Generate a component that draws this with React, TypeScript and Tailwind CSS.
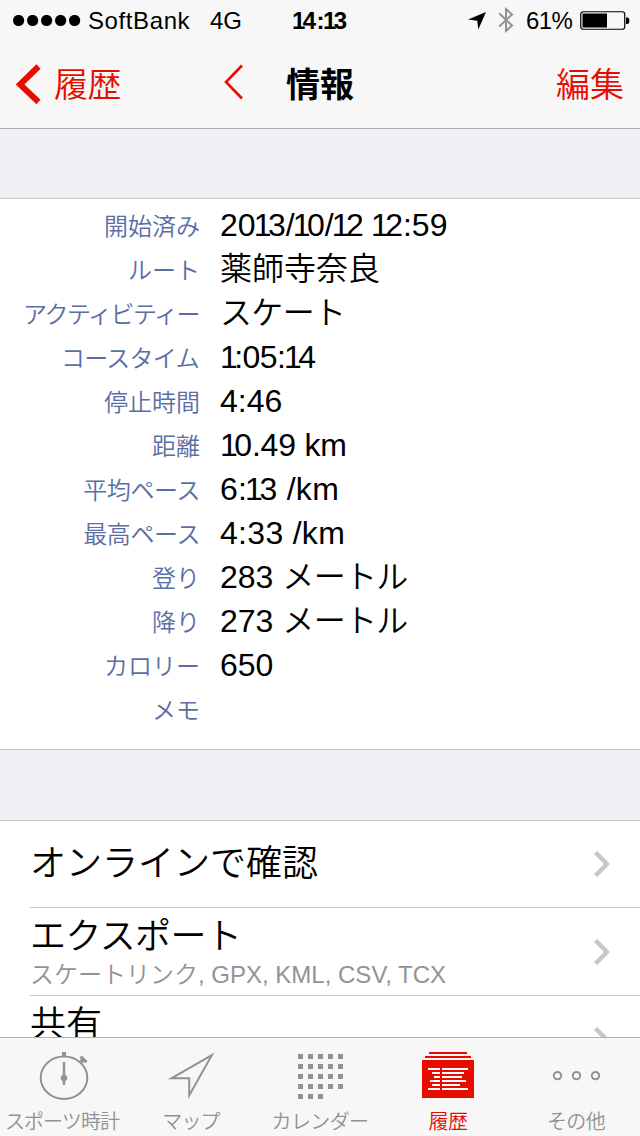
import React from 'react';

const details: [string, string, string][] = [
  ['開始済み', '2013/10/12 12:59', ''],
  ['ルート', '薬師寺奈良', ''],
  ['アクティビティー', 'スケート', 'tracking-[-1.5px] mr-px'],
  ['コースタイム', '1:05:14', 'tracking-[-0.7px] mr-px'],
  ['停止時間', '4:46', ''],
  ['距離', '10.49 km', ''],
  ['平均ペース', '6:13 /km', 'tracking-[-0.4px]'],
  ['最高ペース', '4:33 /km', 'tracking-[-0.4px]'],
  ['登り', '283 メートル', ''],
  ['降り', '273 メートル', ''],
  ['カロリー', '650', ''],
  ['メモ', '', ''],
];

const valueSpacing: Record<string, string> = {
  '1:05:14': 'tracking-[-0.6px]',
  '10.49 km': 'tracking-[-0.2px]',
  '6:13 /km': 'tracking-[0.3px]',
  '4:33 /km': 'tracking-[0.3px]',
};

/* Tightens the spacing around the digit 1 and in katakana words. */
function Figures({ text }: { text: string }) {
  return (
    <>
      {text.split(/(1|[^1](?=1)|[ァ-ー]+)/).map((part, i, all) => {
        if (part === '1') {
          return (
            <span key={i} className="tracking-[-0.11em]">
              1
            </span>
          );
        }
        if (/^[ァ-ー]+$/.test(part)) {
          return (
            <span key={i} className="tracking-[-0.02em]">
              {part}
            </span>
          );
        }
        if (part.length === 1 && all[i + 2] === '1') {
          return (
            <span key={i} className="tracking-[-0.06em]">
              {part}
            </span>
          );
        }
        return part;
      })}
    </>
  );
}

function Disclosure() {
  return (
    <svg width="16" height="26" viewBox="0 0 16 26" fill="none" className="mr-[30px] shrink-0">
      <path d="M1.6 1.4 L13 13 L1.6 24.6" stroke="#c7c7cc" strokeWidth="4.4" />
    </svg>
  );
}

function StatusBar() {
  return (
    <div className="flex h-10 items-center pt-[2px] pl-[13px] text-[24px] leading-[38px] whitespace-pre text-black">
      <svg width="68" height="12" viewBox="0 0 68 12">
        {[5.6, 19.6, 33.6, 47.6, 61.6].map((x) => (
          <circle key={x} cx={x} cy="5.5" r="5.6" />
        ))}
      </svg>
      <span className="ml-[7px] w-[122px] tracking-[0.6px]">SoftBank</span>
      <span className="w-[82px]">4G</span>
      <span className="w-[176px] font-bold tracking-[0.4px]">
        <Figures text="14:13" />
      </span>
      <svg width="18" height="18" viewBox="0 0 18 18" className="shrink-0">
        <path d="M18 0 L10.3 17.5 L9.3 8.7 L0 7.6 Z" />
      </svg>
      <svg width="16" height="28" viewBox="0 0 16 28" fill="none" className="mb-[2px] ml-3 shrink-0">
        <path d="M1.2 7.2 L14 19.5 L8 25 V3 L14 8.5 L1.2 20.5" stroke="#929292" strokeWidth="2" />
      </svg>
      <span className="ml-[12px] w-[54px] shrink-0 tracking-[-0.6px]">61%</span>
      <svg width="50" height="20" viewBox="0 0 50 20" className="shrink-0">
        <rect x="0.75" y="0.75" width="44" height="17.5" rx="2.5" fill="none" stroke="#000" strokeWidth="1.2" />
        <rect x="2.5" y="2.5" width="24.5" height="14" />
        <path d="M46 6.5 h1.2 a2 3 0 0 1 0 6.5 h-1.2 Z" />
      </svg>
    </div>
  );
}

function NavBar() {
  return (
    <div className="flex h-[88px] items-center pr-4 pl-4 text-[34px] leading-[88px] text-[#e80c00]">
      <svg width="26" height="40" viewBox="0 0 26 40" fill="none" className="shrink-0">
        <path d="M22.5 2.5 L4 20.5 L22.5 38" stroke="#e80c00" strokeWidth="6" />
      </svg>
      <span className="mt-[2px] ml-[12px] w-[169px] font-[350] tracking-[-0.5px]">履歴</span>
      <svg width="22" height="36" viewBox="0 0 22 36" fill="none" className="-mt-[4px] shrink-0">
        <path d="M19 1.5 L3 18 L19 34.5" stroke="#e80c00" strokeWidth="2.6" />
      </svg>
      <h1 className="mt-px ml-[41px] grow font-bold text-black">情報</h1>
      <span className="mt-px font-[350]">編集</span>
    </div>
  );
}

function Details() {
  return (
    <dl className="h-[552px] shrink-0 border-y border-[#c8c7cc] bg-white pt-[4px]">
      {details.map(([label, value, spacing]) => (
        <div key={label} className="flex h-11 items-center leading-[44px]">
          <dt className="w-[200px] pt-[3px] text-right text-[24px] font-[350] text-[#5a6ea5]">
            <span className={spacing}>{label}</span>
          </dt>
          <dd className={`ml-5 text-[32px] font-[350] text-black ${valueSpacing[value] ?? ''}`}>
            <Figures text={value} />
          </dd>
        </div>
      ))}
    </dl>
  );
}

function Actions() {
  return (
    <ul className="mt-[70px] border-t border-[#c8c7cc] bg-white pl-[30px]">
      <li className="flex h-[87px] items-center justify-between border-b border-[#c8c7cc]">
        <span className="text-[36px] leading-[50px] font-[350] text-black">オンラインで確認</span>
        <Disclosure />
      </li>
      <li className="flex h-[88px] items-center justify-between border-b border-[#c8c7cc]">
        <div className="flex flex-col pt-[2px]">
          <span className="text-[36px] leading-[44px] font-[350] tracking-[-0.6px] text-black">エクスポート</span>
          <span className="text-[24px] leading-[32px] font-[350] text-[#929297]">
            スケートリンク, GPX, KML, CSV, TCX
          </span>
        </div>
        <Disclosure />
      </li>
      <li className="flex h-[88px] items-center justify-between">
        <div className="flex h-[74px] flex-col">
          <span className="text-[36px] leading-[44px] font-[350] text-black">共有</span>
        </div>
        <Disclosure />
      </li>
    </ul>
  );
}

function StopwatchIcon() {
  return (
    <svg width="52" height="52" viewBox="0 0 52 52" fill="none" stroke="#929292" className="shrink-0">
      <ellipse cx="26" cy="27.8" rx="23.3" ry="21.2" strokeWidth="2" />
      <path d="M26 2 V7" strokeWidth="4" />
      <path d="M26 12 V35" strokeWidth="2.4" />
      <circle cx="26" cy="28" r="3.2" fill="#929292" stroke="none" />
      <path d="M43 12 L46 9" strokeWidth="4" />
      <path d="M42.5 6.5 L48.5 12.2" strokeWidth="3" />
    </svg>
  );
}

function MapIcon() {
  return (
    <svg width="52" height="52" viewBox="0 0 52 52" fill="none" stroke="#929292" strokeWidth="2" className="shrink-0">
      <path d="M45.8 5.2 L5.5 28.3 H23.2 V45.5 Z" strokeMiterlimit="10" />
    </svg>
  );
}

function CalendarIcon() {
  const cells = Array.from({ length: 23 }, (_, i) => i);
  return (
    <svg width="52" height="52" viewBox="0 0 52 52" fill="#929292" className="shrink-0">
      {cells.map((i) => (
        <rect key={i} x={4 + (i % 5) * 10} y={4 + Math.floor(i / 5) * 10} width="5" height="5" />
      ))}
    </svg>
  );
}

function HistoryIcon() {
  return (
    <svg width="52" height="52" viewBox="0 0 52 52" className="shrink-0">
      <path d="M7 2 H45 V4 H7 Z M3 6 H49 V8 H3 Z M0 10 H52 V48 H0 Z" fill="#e80c00" />
      <path
        d="M6 19 H18 M20 19 H46 M10 23 H18 M20 23 H42 M12 27 H18 M20 27 H40 M8 31 H18 M20 31 H44 M10 35 H18 M20 35 H38 M6 39 H18 M20 39 H46"
        stroke="#fff"
        strokeWidth="2"
      />
    </svg>
  );
}

function MoreIcon() {
  return (
    <svg width="52" height="52" viewBox="0 0 52 52" fill="none" stroke="#929292" strokeWidth="2" className="shrink-0">
      <circle cx="7.5" cy="25.6" r="3.7" />
      <circle cx="26.5" cy="25.6" r="3.7" />
      <circle cx="45.5" cy="25.6" r="3.7" />
    </svg>
  );
}

function Tab({
  icon,
  label,
  spacing = 'tracking-[-0.6px]',
  active = false,
}: {
  icon: React.ReactNode;
  label: string;
  spacing?: string;
  active?: boolean;
}) {
  return (
    <div className="flex w-[128px] flex-col items-center pt-[12px]">
      {icon}
      <span
        className={`mt-[5px] text-[20px] leading-[30px] font-[350] whitespace-nowrap ${spacing} ${
          active ? 'text-[#e80c00]' : 'text-[#929292]'
        }`}
      >
        {label}
      </span>
    </div>
  );
}

export default function App() {
  return (
    <div className="flex h-[1136px] w-[640px] flex-col overflow-hidden bg-[#efeff4] font-['Liberation_Sans','Noto_Sans_CJK_JP',sans-serif]">
      <header className="h-[129px] shrink-0 border-b border-[#a9a9ab] bg-[#f7f7f7]">
        <StatusBar />
        <NavBar />
      </header>
      <main className="flex h-[908px] shrink-0 flex-col overflow-hidden pt-[69px]">
        <Details />
        <Actions />
      </main>
      <nav className="flex h-[99px] shrink-0 border-t border-[#b2b2b2] bg-[#f7f7f7]">
        <Tab icon={<StopwatchIcon />} label="スポーツ時計" spacing="tracking-[-0.9px] pr-1" />
        <Tab icon={<MapIcon />} label="マップ" spacing="tracking-[-0.9px] pr-0.5" />
        <Tab icon={<CalendarIcon />} label="カレンダー" />
        <Tab icon={<HistoryIcon />} label="履歴" spacing="tracking-[-0.4px]" active />
        <Tab icon={<MoreIcon />} label="その他" spacing="tracking-[-0.6px]" />
      </nav>
    </div>
  );
}
